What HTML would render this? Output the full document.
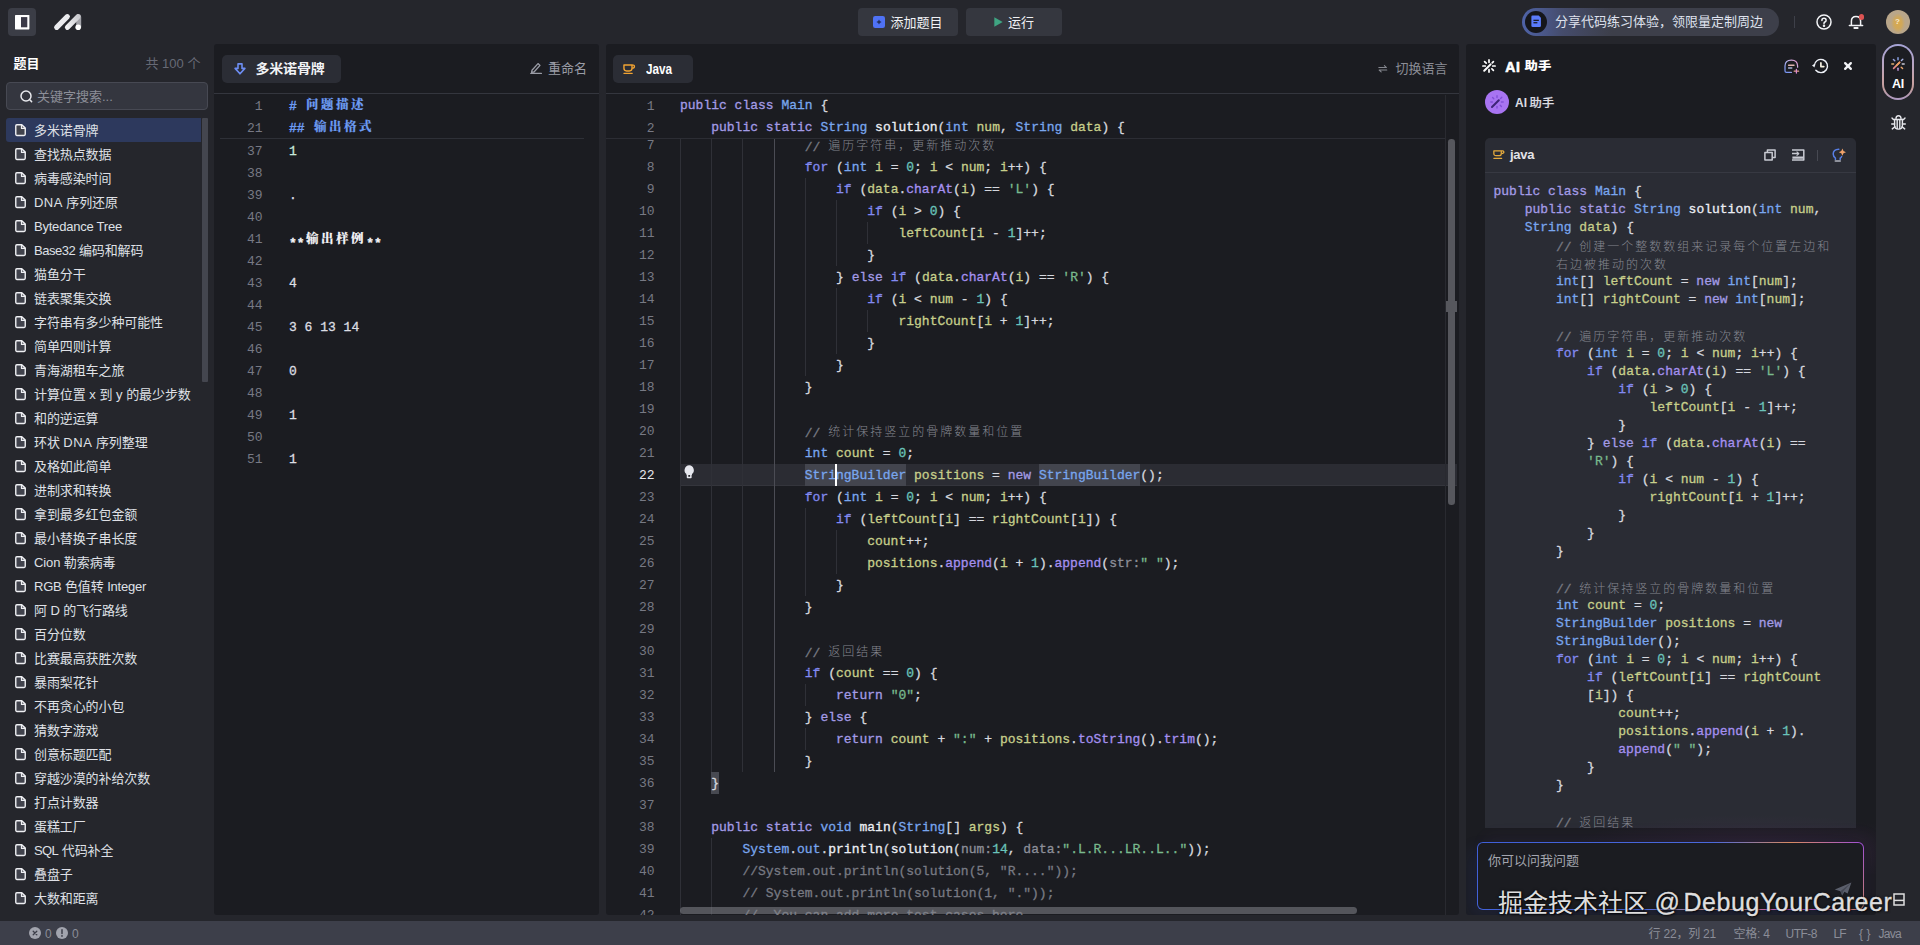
<!DOCTYPE html>
<html lang="zh-CN">
<head>
<meta charset="utf-8">
<title>豆包 MarsCode - 代码练习</title>
<style>

*{box-sizing:border-box;margin:0;padding:0}
html,body{width:1920px;height:945px;overflow:hidden}
body{position:relative;background:#25262c;color:#e4e5ea;
 font-family:"Liberation Sans","Noto Sans CJK SC",sans-serif;font-size:13px;line-height:1}
.abs{position:absolute}
.panel{position:absolute;background:#1b1c21;border-radius:3px;overflow:hidden}
svg{display:block;position:absolute;overflow:visible}
.t{position:absolute;white-space:pre;line-height:1}

/* ---------- top bar ---------- */
#topbar{position:absolute;left:0;top:0;width:1920px;height:44px}
.tbtn{position:absolute;top:8px;height:28px;background:#35373f;border-radius:4px}
#toggle{position:absolute;left:8px;top:8px;width:28px;height:28px;background:#3b3d46;border-radius:4px}
#pill{position:absolute;left:1522px;top:8px;width:1257px;height:28px;border-radius:14px;
 background:linear-gradient(90deg,#4f63a8 0px,#454c6c 40px,#3d3f4a 90px,#3d3f4a 100%);width:257px}

/* ---------- sidebar ---------- */
#sidebar{position:absolute;left:0;top:44px;width:214px;height:877px}
#search{position:absolute;left:6px;top:38px;width:202px;height:28px;background:#34363f;border:1px solid #474953;border-radius:4px}
.item{position:absolute;left:6px;width:195px;height:24px}
.item.sel{background:#2d395d;border-radius:3px 0 0 3px}
.item .t{left:28px;top:6px;font-size:13px;color:#dfe0e6;letter-spacing:-0.1px}
.item svg{left:9.3px;top:6.3px}

/* ---------- code ---------- */
.mono{font-family:"Liberation Mono","Noto Serif CJK SC",monospace;font-size:13px}
.ln{position:absolute;white-space:pre;font-family:"Liberation Mono",monospace;font-size:13px;color:#777984;text-align:right;line-height:22px;height:22px;margin-top:0.6px}
.cl{position:absolute;white-space:pre;font-family:"Liberation Mono","Noto Serif CJK SC",monospace;font-size:13px;line-height:22px;height:22px;color:#d5d7de;-webkit-text-stroke:0.3px;margin-top:0.7px}
.ai .cl{line-height:18px;height:18px;margin-top:0}
.k{color:#a39be6}   /* keyword purple */
.c{color:#838af1}   /* control keyword blue-violet */
.y{color:#79a6ee}   /* type blue */
.v{color:#c7cf8b}   /* variable yellow-green */
.n{color:#6ac3ba}   /* number teal */
.s{color:#79b98d}   /* string green */
.m{color:#a590f0}   /* method call purple */
.f{color:#eceef4}   /* function decl white */
.o{color:#d5d7de}   /* operators */
.h{color:#8d8f99}   /* inlay hint */
.g{color:#787a83}   /* comment */
.g i,.cj{font-style:normal;font-size:12px;letter-spacing:2px;font-family:"Noto Sans CJK SC",sans-serif;font-weight:300;color:#858790;position:relative;top:-0.4px;-webkit-text-stroke:0}
.guide{position:absolute;width:1px;background:#2f3037}

/* ---------- status ---------- */
#status{position:absolute;left:0;top:921px;width:1920px;height:24px;background:#3d3f4a}
#status .t{top:7px;font-size:12px;color:#8b8d98}

.pj{font-family:"Noto Serif CJK SC",serif;font-weight:900;font-size:12.5px;letter-spacing:2.5px;margin-left:1.5px;position:relative;top:-1.3px;-webkit-text-stroke:0.15px}

</style>
</head>
<body>
<div id="topbar">
  <div id="toggle">
    <svg style="left:6.8px;top:6.8px" width="14.4" height="14.4" viewBox="0 0 14.4 14.4"><rect x="0" y="0" width="14.4" height="14.4" rx="0.6" fill="#ffffff"/><rect x="6" y="2.1" width="6.3" height="10.2" fill="#3a3947"/></svg>
  </div>
  <svg style="left:52px;top:12px" width="32" height="20" viewBox="0 0 32 20">
    <defs>
      <linearGradient id="lg1" x1="0" y1="1" x2="1" y2="0"><stop offset="0" stop-color="#ffffff"/><stop offset="1" stop-color="#d2d3d8"/></linearGradient>
      <linearGradient id="lg2" x1="0" y1="1" x2="1" y2="0"><stop offset="0" stop-color="#f1f1f3"/><stop offset="1" stop-color="#cbcbd0"/></linearGradient>
    </defs>
    <path d="M25.6 2.1 Q29.2 2 29.2 5.4 L29.2 15.4 L24.2 15.4 L24.2 6 Z" fill="#a2a2a8"/>
    <line x1="4.7" y1="15.3" x2="15.3" y2="4.7" stroke="#ebebee" stroke-width="5.2" stroke-linecap="round"/>
    <line x1="15.5" y1="15.3" x2="25.9" y2="4.7" stroke="url(#lg2)" stroke-width="5.2" stroke-linecap="round"/>
    <circle cx="26.2" cy="15.3" r="2.8" fill="#ffffff"/>
  </svg>

  <div class="tbtn" style="left:858px;width:100px">
    <svg style="left:15px;top:8px" width="12" height="12" viewBox="0 0 12 12"><rect width="12" height="12" rx="2.2" fill="#4f72f5"/><path d="M6 3.4 L6.9 5.1 L8.6 6 L6.9 6.9 L6 8.6 L5.1 6.9 L3.4 6 L5.1 5.1 Z" fill="#23305f"/></svg>
    <span class="t" style="left:32.5px;top:7.6px;font-size:13px;color:#f1f2f5">添加题目</span>
  </div>
  <div class="tbtn" style="left:966px;width:96px">
    <svg style="left:28px;top:9px" width="9" height="10" viewBox="0 0 9 10"><path d="M0.3 0.2 L8.7 5 L0.3 9.8 Z" fill="#3fa482"/></svg>
    <span class="t" style="left:42px;top:7.6px;font-size:13px;color:#f1f2f5">运行</span>
  </div>

  <div id="pill">
    <div class="abs" style="left:3px;top:3px;width:22px;height:22px;border-radius:11px;background:#15161b"></div>
    <svg style="left:8.6px;top:7.4px" width="10.3" height="12.6" viewBox="0 0 11 13"><path d="M1.6 0.4 H8.2 L10.6 2.6 V11.2 Q10.6 12.6 9.2 12.6 H1.8 Q0.4 12.6 0.4 11.2 V1.6 Q0.4 0.4 1.6 0.4 Z" fill="#5a7bfa"/><rect x="2.6" y="4.8" width="5.8" height="1.3" fill="#15161b"/><rect x="2.6" y="7.4" width="4.2" height="1.3" fill="#15161b"/></svg>
    <span class="t" style="left:33px;top:7.3px;font-size:13px;color:#dfe2ee">分享代码练习体验，领限量定制周边</span>
  </div>
  <div class="abs" style="left:1794px;top:16px;width:1px;height:12px;background:#3e4049"></div>

  <svg style="left:1816px;top:14px" width="16" height="16" viewBox="0 0 16 16" fill="none" stroke="#f3f4f7" stroke-width="1.5" stroke-linecap="round" stroke-linejoin="round"><circle cx="8" cy="8" r="7"/><path d="M5.9 6.4 Q5.9 4.3 8 4.3 Q10.1 4.3 10.1 6.2 Q10.1 7.4 8.9 8 Q8 8.5 8 9.4"/><circle cx="8" cy="11.7" r="0.5" fill="#f3f4f7"/></svg>

  <svg style="left:1848px;top:14px" width="16" height="16" viewBox="0 0 16 16" fill="none" stroke="#f3f4f7" stroke-width="1.5" stroke-linecap="round" stroke-linejoin="round"><path d="M3.4 11.2 V7.2 Q3.4 2.4 8 2.4 Q12.6 2.4 12.6 7.2 V11.2"/><path d="M1.4 11.4 H14.6"/><path d="M6.3 14 H9.7" stroke-width="1.8"/></svg>
  <div class="abs" style="left:1858.6px;top:14.2px;width:5.4px;height:5.4px;border-radius:3px;background:#dd5353"></div>

  <div class="abs" style="left:1886px;top:10px;width:24px;height:24px;border-radius:12px;background:radial-gradient(ellipse 7px 10px at 50% 55%,#d9a94e 0,#d0a85a 55%,#b9a68a 100%)"></div>
  <span class="t" style="left:1895px;top:18px;font-size:8px;font-weight:bold;color:#f6ead0">?</span>
</div>
<div id="sidebar">
<span class="t" style="left:13.5px;top:12.5px;font-size:13px;font-weight:bold;color:#ffffff">题目</span>
<span class="t" style="left:145.5px;top:13px;font-size:13px;color:#676a76">共 100 个</span>
<div id="search"><svg style="left:13px;top:7px" width="13" height="13" viewBox="0 0 13 13" fill="none" stroke="#e8e9ee" stroke-width="1.5" stroke-linecap="round"><circle cx="6" cy="6" r="5"/><path d="M10 10 L11.6 11.6"/></svg><span class="t" style="left:30px;top:6.5px;font-size:13px;color:#8c8e98">关键字搜索...</span></div>
<div class="item sel" style="top:74px"><svg width="11.3" height="12.2" viewBox="0 0 12 13"><path d="M1.9 0.8 H7.2 L10.9 4.4 V11 Q10.9 12.2 9.7 12.2 H1.9 Q0.8 12.2 0.8 11 V2 Q0.8 0.8 1.9 0.8 Z" fill="#41434d" stroke="#eeeff3" stroke-width="1.5" stroke-linejoin="round"/><path d="M6.9 0.9 V4.7 H10.8" fill="none" stroke="#eeeff3" stroke-width="1.3" stroke-linejoin="round"/></svg><span class="t">多米诺骨牌</span></div>
<div class="item" style="top:98px"><svg width="11.3" height="12.2" viewBox="0 0 12 13"><path d="M1.9 0.8 H7.2 L10.9 4.4 V11 Q10.9 12.2 9.7 12.2 H1.9 Q0.8 12.2 0.8 11 V2 Q0.8 0.8 1.9 0.8 Z" fill="#41434d" stroke="#eeeff3" stroke-width="1.5" stroke-linejoin="round"/><path d="M6.9 0.9 V4.7 H10.8" fill="none" stroke="#eeeff3" stroke-width="1.3" stroke-linejoin="round"/></svg><span class="t">查找热点数据</span></div>
<div class="item" style="top:122px"><svg width="11.3" height="12.2" viewBox="0 0 12 13"><path d="M1.9 0.8 H7.2 L10.9 4.4 V11 Q10.9 12.2 9.7 12.2 H1.9 Q0.8 12.2 0.8 11 V2 Q0.8 0.8 1.9 0.8 Z" fill="#41434d" stroke="#eeeff3" stroke-width="1.5" stroke-linejoin="round"/><path d="M6.9 0.9 V4.7 H10.8" fill="none" stroke="#eeeff3" stroke-width="1.3" stroke-linejoin="round"/></svg><span class="t">病毒感染时间</span></div>
<div class="item" style="top:146px"><svg width="11.3" height="12.2" viewBox="0 0 12 13"><path d="M1.9 0.8 H7.2 L10.9 4.4 V11 Q10.9 12.2 9.7 12.2 H1.9 Q0.8 12.2 0.8 11 V2 Q0.8 0.8 1.9 0.8 Z" fill="#41434d" stroke="#eeeff3" stroke-width="1.5" stroke-linejoin="round"/><path d="M6.9 0.9 V4.7 H10.8" fill="none" stroke="#eeeff3" stroke-width="1.3" stroke-linejoin="round"/></svg><span class="t"><span style="letter-spacing:0.45px">DNA</span> 序列还原</span></div>
<div class="item" style="top:170px"><svg width="11.3" height="12.2" viewBox="0 0 12 13"><path d="M1.9 0.8 H7.2 L10.9 4.4 V11 Q10.9 12.2 9.7 12.2 H1.9 Q0.8 12.2 0.8 11 V2 Q0.8 0.8 1.9 0.8 Z" fill="#41434d" stroke="#eeeff3" stroke-width="1.5" stroke-linejoin="round"/><path d="M6.9 0.9 V4.7 H10.8" fill="none" stroke="#eeeff3" stroke-width="1.3" stroke-linejoin="round"/></svg><span class="t"><span style="letter-spacing:-0.22px">Bytedance Tree</span></span></div>
<div class="item" style="top:194px"><svg width="11.3" height="12.2" viewBox="0 0 12 13"><path d="M1.9 0.8 H7.2 L10.9 4.4 V11 Q10.9 12.2 9.7 12.2 H1.9 Q0.8 12.2 0.8 11 V2 Q0.8 0.8 1.9 0.8 Z" fill="#41434d" stroke="#eeeff3" stroke-width="1.5" stroke-linejoin="round"/><path d="M6.9 0.9 V4.7 H10.8" fill="none" stroke="#eeeff3" stroke-width="1.3" stroke-linejoin="round"/></svg><span class="t"><span style="letter-spacing:-0.45px">Base32</span> 编码和解码</span></div>
<div class="item" style="top:218px"><svg width="11.3" height="12.2" viewBox="0 0 12 13"><path d="M1.9 0.8 H7.2 L10.9 4.4 V11 Q10.9 12.2 9.7 12.2 H1.9 Q0.8 12.2 0.8 11 V2 Q0.8 0.8 1.9 0.8 Z" fill="#41434d" stroke="#eeeff3" stroke-width="1.5" stroke-linejoin="round"/><path d="M6.9 0.9 V4.7 H10.8" fill="none" stroke="#eeeff3" stroke-width="1.3" stroke-linejoin="round"/></svg><span class="t">猫鱼分干</span></div>
<div class="item" style="top:242px"><svg width="11.3" height="12.2" viewBox="0 0 12 13"><path d="M1.9 0.8 H7.2 L10.9 4.4 V11 Q10.9 12.2 9.7 12.2 H1.9 Q0.8 12.2 0.8 11 V2 Q0.8 0.8 1.9 0.8 Z" fill="#41434d" stroke="#eeeff3" stroke-width="1.5" stroke-linejoin="round"/><path d="M6.9 0.9 V4.7 H10.8" fill="none" stroke="#eeeff3" stroke-width="1.3" stroke-linejoin="round"/></svg><span class="t">链表聚集交换</span></div>
<div class="item" style="top:266px"><svg width="11.3" height="12.2" viewBox="0 0 12 13"><path d="M1.9 0.8 H7.2 L10.9 4.4 V11 Q10.9 12.2 9.7 12.2 H1.9 Q0.8 12.2 0.8 11 V2 Q0.8 0.8 1.9 0.8 Z" fill="#41434d" stroke="#eeeff3" stroke-width="1.5" stroke-linejoin="round"/><path d="M6.9 0.9 V4.7 H10.8" fill="none" stroke="#eeeff3" stroke-width="1.3" stroke-linejoin="round"/></svg><span class="t">字符串有多少种可能性</span></div>
<div class="item" style="top:290px"><svg width="11.3" height="12.2" viewBox="0 0 12 13"><path d="M1.9 0.8 H7.2 L10.9 4.4 V11 Q10.9 12.2 9.7 12.2 H1.9 Q0.8 12.2 0.8 11 V2 Q0.8 0.8 1.9 0.8 Z" fill="#41434d" stroke="#eeeff3" stroke-width="1.5" stroke-linejoin="round"/><path d="M6.9 0.9 V4.7 H10.8" fill="none" stroke="#eeeff3" stroke-width="1.3" stroke-linejoin="round"/></svg><span class="t">简单四则计算</span></div>
<div class="item" style="top:314px"><svg width="11.3" height="12.2" viewBox="0 0 12 13"><path d="M1.9 0.8 H7.2 L10.9 4.4 V11 Q10.9 12.2 9.7 12.2 H1.9 Q0.8 12.2 0.8 11 V2 Q0.8 0.8 1.9 0.8 Z" fill="#41434d" stroke="#eeeff3" stroke-width="1.5" stroke-linejoin="round"/><path d="M6.9 0.9 V4.7 H10.8" fill="none" stroke="#eeeff3" stroke-width="1.3" stroke-linejoin="round"/></svg><span class="t">青海湖租车之旅</span></div>
<div class="item" style="top:338px"><svg width="11.3" height="12.2" viewBox="0 0 12 13"><path d="M1.9 0.8 H7.2 L10.9 4.4 V11 Q10.9 12.2 9.7 12.2 H1.9 Q0.8 12.2 0.8 11 V2 Q0.8 0.8 1.9 0.8 Z" fill="#41434d" stroke="#eeeff3" stroke-width="1.5" stroke-linejoin="round"/><path d="M6.9 0.9 V4.7 H10.8" fill="none" stroke="#eeeff3" stroke-width="1.3" stroke-linejoin="round"/></svg><span class="t">计算位置 <span style="letter-spacing:0.3px">x</span> 到 <span style="letter-spacing:0.3px">y</span> 的最少步数</span></div>
<div class="item" style="top:362px"><svg width="11.3" height="12.2" viewBox="0 0 12 13"><path d="M1.9 0.8 H7.2 L10.9 4.4 V11 Q10.9 12.2 9.7 12.2 H1.9 Q0.8 12.2 0.8 11 V2 Q0.8 0.8 1.9 0.8 Z" fill="#41434d" stroke="#eeeff3" stroke-width="1.5" stroke-linejoin="round"/><path d="M6.9 0.9 V4.7 H10.8" fill="none" stroke="#eeeff3" stroke-width="1.3" stroke-linejoin="round"/></svg><span class="t">和的逆运算</span></div>
<div class="item" style="top:386px"><svg width="11.3" height="12.2" viewBox="0 0 12 13"><path d="M1.9 0.8 H7.2 L10.9 4.4 V11 Q10.9 12.2 9.7 12.2 H1.9 Q0.8 12.2 0.8 11 V2 Q0.8 0.8 1.9 0.8 Z" fill="#41434d" stroke="#eeeff3" stroke-width="1.5" stroke-linejoin="round"/><path d="M6.9 0.9 V4.7 H10.8" fill="none" stroke="#eeeff3" stroke-width="1.3" stroke-linejoin="round"/></svg><span class="t">环状 <span style="letter-spacing:0.55px">DNA</span> 序列整理</span></div>
<div class="item" style="top:410px"><svg width="11.3" height="12.2" viewBox="0 0 12 13"><path d="M1.9 0.8 H7.2 L10.9 4.4 V11 Q10.9 12.2 9.7 12.2 H1.9 Q0.8 12.2 0.8 11 V2 Q0.8 0.8 1.9 0.8 Z" fill="#41434d" stroke="#eeeff3" stroke-width="1.5" stroke-linejoin="round"/><path d="M6.9 0.9 V4.7 H10.8" fill="none" stroke="#eeeff3" stroke-width="1.3" stroke-linejoin="round"/></svg><span class="t">及格如此简单</span></div>
<div class="item" style="top:434px"><svg width="11.3" height="12.2" viewBox="0 0 12 13"><path d="M1.9 0.8 H7.2 L10.9 4.4 V11 Q10.9 12.2 9.7 12.2 H1.9 Q0.8 12.2 0.8 11 V2 Q0.8 0.8 1.9 0.8 Z" fill="#41434d" stroke="#eeeff3" stroke-width="1.5" stroke-linejoin="round"/><path d="M6.9 0.9 V4.7 H10.8" fill="none" stroke="#eeeff3" stroke-width="1.3" stroke-linejoin="round"/></svg><span class="t">进制求和转换</span></div>
<div class="item" style="top:458px"><svg width="11.3" height="12.2" viewBox="0 0 12 13"><path d="M1.9 0.8 H7.2 L10.9 4.4 V11 Q10.9 12.2 9.7 12.2 H1.9 Q0.8 12.2 0.8 11 V2 Q0.8 0.8 1.9 0.8 Z" fill="#41434d" stroke="#eeeff3" stroke-width="1.5" stroke-linejoin="round"/><path d="M6.9 0.9 V4.7 H10.8" fill="none" stroke="#eeeff3" stroke-width="1.3" stroke-linejoin="round"/></svg><span class="t">拿到最多红包金额</span></div>
<div class="item" style="top:482px"><svg width="11.3" height="12.2" viewBox="0 0 12 13"><path d="M1.9 0.8 H7.2 L10.9 4.4 V11 Q10.9 12.2 9.7 12.2 H1.9 Q0.8 12.2 0.8 11 V2 Q0.8 0.8 1.9 0.8 Z" fill="#41434d" stroke="#eeeff3" stroke-width="1.5" stroke-linejoin="round"/><path d="M6.9 0.9 V4.7 H10.8" fill="none" stroke="#eeeff3" stroke-width="1.3" stroke-linejoin="round"/></svg><span class="t">最小替换子串长度</span></div>
<div class="item" style="top:506px"><svg width="11.3" height="12.2" viewBox="0 0 12 13"><path d="M1.9 0.8 H7.2 L10.9 4.4 V11 Q10.9 12.2 9.7 12.2 H1.9 Q0.8 12.2 0.8 11 V2 Q0.8 0.8 1.9 0.8 Z" fill="#41434d" stroke="#eeeff3" stroke-width="1.5" stroke-linejoin="round"/><path d="M6.9 0.9 V4.7 H10.8" fill="none" stroke="#eeeff3" stroke-width="1.3" stroke-linejoin="round"/></svg><span class="t">Cion 勒索病毒</span></div>
<div class="item" style="top:530px"><svg width="11.3" height="12.2" viewBox="0 0 12 13"><path d="M1.9 0.8 H7.2 L10.9 4.4 V11 Q10.9 12.2 9.7 12.2 H1.9 Q0.8 12.2 0.8 11 V2 Q0.8 0.8 1.9 0.8 Z" fill="#41434d" stroke="#eeeff3" stroke-width="1.5" stroke-linejoin="round"/><path d="M6.9 0.9 V4.7 H10.8" fill="none" stroke="#eeeff3" stroke-width="1.3" stroke-linejoin="round"/></svg><span class="t"><span style="letter-spacing:-0.24px">RGB</span> 色值转 <span style="letter-spacing:-0.24px">Integer</span></span></div>
<div class="item" style="top:554px"><svg width="11.3" height="12.2" viewBox="0 0 12 13"><path d="M1.9 0.8 H7.2 L10.9 4.4 V11 Q10.9 12.2 9.7 12.2 H1.9 Q0.8 12.2 0.8 11 V2 Q0.8 0.8 1.9 0.8 Z" fill="#41434d" stroke="#eeeff3" stroke-width="1.5" stroke-linejoin="round"/><path d="M6.9 0.9 V4.7 H10.8" fill="none" stroke="#eeeff3" stroke-width="1.3" stroke-linejoin="round"/></svg><span class="t">阿 D 的飞行路线</span></div>
<div class="item" style="top:578px"><svg width="11.3" height="12.2" viewBox="0 0 12 13"><path d="M1.9 0.8 H7.2 L10.9 4.4 V11 Q10.9 12.2 9.7 12.2 H1.9 Q0.8 12.2 0.8 11 V2 Q0.8 0.8 1.9 0.8 Z" fill="#41434d" stroke="#eeeff3" stroke-width="1.5" stroke-linejoin="round"/><path d="M6.9 0.9 V4.7 H10.8" fill="none" stroke="#eeeff3" stroke-width="1.3" stroke-linejoin="round"/></svg><span class="t">百分位数</span></div>
<div class="item" style="top:602px"><svg width="11.3" height="12.2" viewBox="0 0 12 13"><path d="M1.9 0.8 H7.2 L10.9 4.4 V11 Q10.9 12.2 9.7 12.2 H1.9 Q0.8 12.2 0.8 11 V2 Q0.8 0.8 1.9 0.8 Z" fill="#41434d" stroke="#eeeff3" stroke-width="1.5" stroke-linejoin="round"/><path d="M6.9 0.9 V4.7 H10.8" fill="none" stroke="#eeeff3" stroke-width="1.3" stroke-linejoin="round"/></svg><span class="t">比赛最高获胜次数</span></div>
<div class="item" style="top:626px"><svg width="11.3" height="12.2" viewBox="0 0 12 13"><path d="M1.9 0.8 H7.2 L10.9 4.4 V11 Q10.9 12.2 9.7 12.2 H1.9 Q0.8 12.2 0.8 11 V2 Q0.8 0.8 1.9 0.8 Z" fill="#41434d" stroke="#eeeff3" stroke-width="1.5" stroke-linejoin="round"/><path d="M6.9 0.9 V4.7 H10.8" fill="none" stroke="#eeeff3" stroke-width="1.3" stroke-linejoin="round"/></svg><span class="t">暴雨梨花针</span></div>
<div class="item" style="top:650px"><svg width="11.3" height="12.2" viewBox="0 0 12 13"><path d="M1.9 0.8 H7.2 L10.9 4.4 V11 Q10.9 12.2 9.7 12.2 H1.9 Q0.8 12.2 0.8 11 V2 Q0.8 0.8 1.9 0.8 Z" fill="#41434d" stroke="#eeeff3" stroke-width="1.5" stroke-linejoin="round"/><path d="M6.9 0.9 V4.7 H10.8" fill="none" stroke="#eeeff3" stroke-width="1.3" stroke-linejoin="round"/></svg><span class="t">不再贪心的小包</span></div>
<div class="item" style="top:674px"><svg width="11.3" height="12.2" viewBox="0 0 12 13"><path d="M1.9 0.8 H7.2 L10.9 4.4 V11 Q10.9 12.2 9.7 12.2 H1.9 Q0.8 12.2 0.8 11 V2 Q0.8 0.8 1.9 0.8 Z" fill="#41434d" stroke="#eeeff3" stroke-width="1.5" stroke-linejoin="round"/><path d="M6.9 0.9 V4.7 H10.8" fill="none" stroke="#eeeff3" stroke-width="1.3" stroke-linejoin="round"/></svg><span class="t">猜数字游戏</span></div>
<div class="item" style="top:698px"><svg width="11.3" height="12.2" viewBox="0 0 12 13"><path d="M1.9 0.8 H7.2 L10.9 4.4 V11 Q10.9 12.2 9.7 12.2 H1.9 Q0.8 12.2 0.8 11 V2 Q0.8 0.8 1.9 0.8 Z" fill="#41434d" stroke="#eeeff3" stroke-width="1.5" stroke-linejoin="round"/><path d="M6.9 0.9 V4.7 H10.8" fill="none" stroke="#eeeff3" stroke-width="1.3" stroke-linejoin="round"/></svg><span class="t">创意标题匹配</span></div>
<div class="item" style="top:722px"><svg width="11.3" height="12.2" viewBox="0 0 12 13"><path d="M1.9 0.8 H7.2 L10.9 4.4 V11 Q10.9 12.2 9.7 12.2 H1.9 Q0.8 12.2 0.8 11 V2 Q0.8 0.8 1.9 0.8 Z" fill="#41434d" stroke="#eeeff3" stroke-width="1.5" stroke-linejoin="round"/><path d="M6.9 0.9 V4.7 H10.8" fill="none" stroke="#eeeff3" stroke-width="1.3" stroke-linejoin="round"/></svg><span class="t">穿越沙漠的补给次数</span></div>
<div class="item" style="top:746px"><svg width="11.3" height="12.2" viewBox="0 0 12 13"><path d="M1.9 0.8 H7.2 L10.9 4.4 V11 Q10.9 12.2 9.7 12.2 H1.9 Q0.8 12.2 0.8 11 V2 Q0.8 0.8 1.9 0.8 Z" fill="#41434d" stroke="#eeeff3" stroke-width="1.5" stroke-linejoin="round"/><path d="M6.9 0.9 V4.7 H10.8" fill="none" stroke="#eeeff3" stroke-width="1.3" stroke-linejoin="round"/></svg><span class="t">打点计数器</span></div>
<div class="item" style="top:770px"><svg width="11.3" height="12.2" viewBox="0 0 12 13"><path d="M1.9 0.8 H7.2 L10.9 4.4 V11 Q10.9 12.2 9.7 12.2 H1.9 Q0.8 12.2 0.8 11 V2 Q0.8 0.8 1.9 0.8 Z" fill="#41434d" stroke="#eeeff3" stroke-width="1.5" stroke-linejoin="round"/><path d="M6.9 0.9 V4.7 H10.8" fill="none" stroke="#eeeff3" stroke-width="1.3" stroke-linejoin="round"/></svg><span class="t">蛋糕工厂</span></div>
<div class="item" style="top:794px"><svg width="11.3" height="12.2" viewBox="0 0 12 13"><path d="M1.9 0.8 H7.2 L10.9 4.4 V11 Q10.9 12.2 9.7 12.2 H1.9 Q0.8 12.2 0.8 11 V2 Q0.8 0.8 1.9 0.8 Z" fill="#41434d" stroke="#eeeff3" stroke-width="1.5" stroke-linejoin="round"/><path d="M6.9 0.9 V4.7 H10.8" fill="none" stroke="#eeeff3" stroke-width="1.3" stroke-linejoin="round"/></svg><span class="t"><span style="letter-spacing:-0.6px">SQL</span> 代码补全</span></div>
<div class="item" style="top:818px"><svg width="11.3" height="12.2" viewBox="0 0 12 13"><path d="M1.9 0.8 H7.2 L10.9 4.4 V11 Q10.9 12.2 9.7 12.2 H1.9 Q0.8 12.2 0.8 11 V2 Q0.8 0.8 1.9 0.8 Z" fill="#41434d" stroke="#eeeff3" stroke-width="1.5" stroke-linejoin="round"/><path d="M6.9 0.9 V4.7 H10.8" fill="none" stroke="#eeeff3" stroke-width="1.3" stroke-linejoin="round"/></svg><span class="t">叠盘子</span></div>
<div class="item" style="top:842px"><svg width="11.3" height="12.2" viewBox="0 0 12 13"><path d="M1.9 0.8 H7.2 L10.9 4.4 V11 Q10.9 12.2 9.7 12.2 H1.9 Q0.8 12.2 0.8 11 V2 Q0.8 0.8 1.9 0.8 Z" fill="#41434d" stroke="#eeeff3" stroke-width="1.5" stroke-linejoin="round"/><path d="M6.9 0.9 V4.7 H10.8" fill="none" stroke="#eeeff3" stroke-width="1.3" stroke-linejoin="round"/></svg><span class="t">大数和距离</span></div>
<div class="abs" style="left:202px;top:74px;width:6px;height:264px;background:#44464f;border-radius:1px"></div>
</div>
<div class="panel" id="problem" style="left:214px;top:44px;width:385px;height:871px">
<div class="abs" style="left:8px;top:11px;width:119px;height:28px;background:#2b2d35;border-radius:5px"><svg style="left:11.5px;top:8px" width="12" height="12" viewBox="0 0 12 12" fill="none" stroke="#6d8df2" stroke-width="1.6" stroke-linejoin="round"><path d="M4 0.9 H8 V5.4 H10.9 L6 10.8 L1.1 5.4 H4 Z"/></svg><span class="t" style="left:33.5px;top:5.5px;font-size:14px;font-weight:bold;color:#f2f3f6;letter-spacing:-0.2px;transform:scaleY(0.93)">多米诺骨牌</span></div>
<svg style="left:316px;top:18px" width="12" height="12" viewBox="0 0 12 12" fill="none" stroke="#9a9ca6" stroke-width="1.3" stroke-linejoin="round" stroke-linecap="round"><path d="M2 8.2 L8 1.6 L10 3.4 L4 10 L1.6 10.4 Z"/><path d="M0.8 11.4 H11.4"/></svg>
<span class="t" style="left:334px;top:18px;font-size:13px;color:#9a9ca6">重命名</span>
<div class="abs" style="left:0;top:49px;width:385px;height:1px;background:#34363e"></div>
<div class="ln" style="left:0;top:51px;width:48.5px">1</div>
<div class="cl" style="left:75px;top:49.6px;color:#6c9af1;font-weight:bold"># <span class="pj">问题描述</span></div>
<div class="ln" style="left:0;top:73px;width:48.5px">21</div>
<div class="cl" style="left:75px;top:71.6px;color:#6c9af1;font-weight:bold">## <span class="pj">输出格式</span></div>
<div class="abs" style="left:6px;top:94px;width:364px;height:1px;background:#2e3037"></div>
<div class="ln" style="left:0;top:96px;width:48.5px">37</div>
<div class="cl" style="left:75px;top:96px;color:#c6e8da">1</div>
<div class="ln" style="left:0;top:118px;width:48.5px">38</div>
<div class="ln" style="left:0;top:140px;width:48.5px">39</div>
<div class="cl" style="left:75px;top:140px;color:#dcdde2">.</div>
<div class="ln" style="left:0;top:162px;width:48.5px">40</div>
<div class="ln" style="left:0;top:184px;width:48.5px">41</div>
<div class="cl" style="left:75px;top:184px;color:#f4f4f7;font-weight:bold"><span style="position:relative;top:2.5px">**</span><span class="pj">输出样例</span><span style="position:relative;top:2.5px">**</span></div>
<div class="ln" style="left:0;top:206px;width:48.5px">42</div>
<div class="ln" style="left:0;top:228px;width:48.5px">43</div>
<div class="cl" style="left:75px;top:228px;color:#dcdde2">4</div>
<div class="ln" style="left:0;top:250px;width:48.5px">44</div>
<div class="ln" style="left:0;top:272px;width:48.5px">45</div>
<div class="cl" style="left:75px;top:272px;color:#dcdde2">3 6 13 14</div>
<div class="ln" style="left:0;top:294px;width:48.5px">46</div>
<div class="ln" style="left:0;top:316px;width:48.5px">47</div>
<div class="cl" style="left:75px;top:316px;color:#dcdde2">0</div>
<div class="ln" style="left:0;top:338px;width:48.5px">48</div>
<div class="ln" style="left:0;top:360px;width:48.5px">49</div>
<div class="cl" style="left:75px;top:360px;color:#dcdde2">1</div>
<div class="ln" style="left:0;top:382px;width:48.5px">50</div>
<div class="ln" style="left:0;top:404px;width:48.5px">51</div>
<div class="cl" style="left:75px;top:404px;color:#dcdde2">1</div>
</div>
<div class="panel" id="editor" style="left:605.6px;top:44px;width:853.4px;height:871px"><div class="abs" style="left:0.4px;top:0;width:853px;height:871px">
<div class="abs" style="left:0;top:95px;width:853px;height:776px;overflow:hidden"><div class="abs" style="left:0;top:-95px;width:853px;height:871px">
<div class="abs" style="left:74px;top:420px;width:777px;height:22px;background:#2b2c33;border-bottom:1px solid #34353c"></div>
<div class="abs" style="left:198.8px;top:420px;width:101.4px;height:22px;background:#43454e"></div>
<div class="abs" style="left:432.8px;top:420px;width:101.4px;height:22px;background:#43454e"></div>
<div class="abs" style="left:105.2px;top:728px;width:8px;height:22px;background:#474951"></div>
<div class="guide" style="left:74.0px;top:90px;height:792px;background:#2f3037"></div>
<div class="guide" style="left:105.2px;top:90px;height:638px;background:#2f3037"></div>
<div class="guide" style="left:136.4px;top:90px;height:638px;background:#2f3037"></div>
<div class="guide" style="left:167.6px;top:90px;height:638px;background:#4b4c54"></div>
<div class="guide" style="left:198.8px;top:134px;height:198px;background:#2f3037"></div>
<div class="guide" style="left:230.0px;top:156px;height:66px;background:#2f3037"></div>
<div class="guide" style="left:261.2px;top:178px;height:22px;background:#2f3037"></div>
<div class="guide" style="left:230.0px;top:244px;height:66px;background:#2f3037"></div>
<div class="guide" style="left:261.2px;top:266px;height:22px;background:#2f3037"></div>
<div class="guide" style="left:198.8px;top:464px;height:88px;background:#2f3037"></div>
<div class="guide" style="left:230.0px;top:486px;height:44px;background:#2f3037"></div>
<div class="guide" style="left:198.8px;top:640px;height:22px;background:#2f3037"></div>
<div class="guide" style="left:198.8px;top:684px;height:22px;background:#2f3037"></div>
<div class="guide" style="left:105.2px;top:794px;height:88px;background:#2f3037"></div>
<div class="ln" style="left:0;top:90px;width:48.5px">7</div>
<div class="cl" style="left:74px;top:90px">                <span class="g">// <i>遍历字符串，更新推动次数</i></span></div>
<div class="ln" style="left:0;top:112px;width:48.5px">8</div>
<div class="cl" style="left:74px;top:112px">                <span class="c">for</span> (<span class="y">int</span> <span class="v">i</span> = <span class="n">0</span>; <span class="v">i</span> &lt; <span class="v">num</span>; <span class="v">i</span>++) {</div>
<div class="ln" style="left:0;top:134px;width:48.5px">9</div>
<div class="cl" style="left:74px;top:134px">                    <span class="c">if</span> (<span class="v">data</span>.<span class="m">charAt</span>(<span class="v">i</span>) == <span class="s">'L'</span>) {</div>
<div class="ln" style="left:0;top:156px;width:48.5px">10</div>
<div class="cl" style="left:74px;top:156px">                        <span class="c">if</span> (<span class="v">i</span> &gt; <span class="n">0</span>) {</div>
<div class="ln" style="left:0;top:178px;width:48.5px">11</div>
<div class="cl" style="left:74px;top:178px">                            <span class="v">leftCount</span>[<span class="v">i</span> - <span class="n">1</span>]++;</div>
<div class="ln" style="left:0;top:200px;width:48.5px">12</div>
<div class="cl" style="left:74px;top:200px">                        }</div>
<div class="ln" style="left:0;top:222px;width:48.5px">13</div>
<div class="cl" style="left:74px;top:222px">                    } <span class="k">else</span> <span class="c">if</span> (<span class="v">data</span>.<span class="m">charAt</span>(<span class="v">i</span>) == <span class="s">'R'</span>) {</div>
<div class="ln" style="left:0;top:244px;width:48.5px">14</div>
<div class="cl" style="left:74px;top:244px">                        <span class="c">if</span> (<span class="v">i</span> &lt; <span class="v">num</span> - <span class="n">1</span>) {</div>
<div class="ln" style="left:0;top:266px;width:48.5px">15</div>
<div class="cl" style="left:74px;top:266px">                            <span class="v">rightCount</span>[<span class="v">i</span> + <span class="n">1</span>]++;</div>
<div class="ln" style="left:0;top:288px;width:48.5px">16</div>
<div class="cl" style="left:74px;top:288px">                        }</div>
<div class="ln" style="left:0;top:310px;width:48.5px">17</div>
<div class="cl" style="left:74px;top:310px">                    }</div>
<div class="ln" style="left:0;top:332px;width:48.5px">18</div>
<div class="cl" style="left:74px;top:332px">                }</div>
<div class="ln" style="left:0;top:354px;width:48.5px">19</div>
<div class="ln" style="left:0;top:376px;width:48.5px">20</div>
<div class="cl" style="left:74px;top:376px">                <span class="g">// <i>统计保持竖立的骨牌数量和位置</i></span></div>
<div class="ln" style="left:0;top:398px;width:48.5px">21</div>
<div class="cl" style="left:74px;top:398px">                <span class="y">int</span> <span class="v">count</span> = <span class="n">0</span>;</div>
<div class="ln" style="left:0;top:420px;width:48.5px;color:#e6e7ec">22</div>
<div class="cl" style="left:74px;top:420px">                <span class="y">StringBuilder</span> <span class="v">positions</span> = <span class="k">new</span> <span class="y">StringBuilder</span>();</div>
<div class="ln" style="left:0;top:442px;width:48.5px">23</div>
<div class="cl" style="left:74px;top:442px">                <span class="c">for</span> (<span class="y">int</span> <span class="v">i</span> = <span class="n">0</span>; <span class="v">i</span> &lt; <span class="v">num</span>; <span class="v">i</span>++) {</div>
<div class="ln" style="left:0;top:464px;width:48.5px">24</div>
<div class="cl" style="left:74px;top:464px">                    <span class="c">if</span> (<span class="v">leftCount</span>[<span class="v">i</span>] == <span class="v">rightCount</span>[<span class="v">i</span>]) {</div>
<div class="ln" style="left:0;top:486px;width:48.5px">25</div>
<div class="cl" style="left:74px;top:486px">                        <span class="v">count</span>++;</div>
<div class="ln" style="left:0;top:508px;width:48.5px">26</div>
<div class="cl" style="left:74px;top:508px">                        <span class="v">positions</span>.<span class="m">append</span>(<span class="v">i</span> + <span class="n">1</span>).<span class="m">append</span>(<span class="h">str:</span><span class="s">" "</span>);</div>
<div class="ln" style="left:0;top:530px;width:48.5px">27</div>
<div class="cl" style="left:74px;top:530px">                    }</div>
<div class="ln" style="left:0;top:552px;width:48.5px">28</div>
<div class="cl" style="left:74px;top:552px">                }</div>
<div class="ln" style="left:0;top:574px;width:48.5px">29</div>
<div class="ln" style="left:0;top:596px;width:48.5px">30</div>
<div class="cl" style="left:74px;top:596px">                <span class="g">// <i>返回结果</i></span></div>
<div class="ln" style="left:0;top:618px;width:48.5px">31</div>
<div class="cl" style="left:74px;top:618px">                <span class="c">if</span> (<span class="v">count</span> == <span class="n">0</span>) {</div>
<div class="ln" style="left:0;top:640px;width:48.5px">32</div>
<div class="cl" style="left:74px;top:640px">                    <span class="k">return</span> <span class="s">"0"</span>;</div>
<div class="ln" style="left:0;top:662px;width:48.5px">33</div>
<div class="cl" style="left:74px;top:662px">                } <span class="k">else</span> {</div>
<div class="ln" style="left:0;top:684px;width:48.5px">34</div>
<div class="cl" style="left:74px;top:684px">                    <span class="k">return</span> <span class="v">count</span> + <span class="s">":"</span> + <span class="v">positions</span>.<span class="m">toString</span>().<span class="m">trim</span>();</div>
<div class="ln" style="left:0;top:706px;width:48.5px">35</div>
<div class="cl" style="left:74px;top:706px">                }</div>
<div class="ln" style="left:0;top:728px;width:48.5px">36</div>
<div class="cl" style="left:74px;top:728px">    }</div>
<div class="ln" style="left:0;top:750px;width:48.5px">37</div>
<div class="ln" style="left:0;top:772px;width:48.5px">38</div>
<div class="cl" style="left:74px;top:772px">    <span class="k">public</span> <span class="k">static</span> <span class="y">void</span> <span class="f">main</span>(<span class="y">String</span>[] <span class="v">args</span>) {</div>
<div class="ln" style="left:0;top:794px;width:48.5px">39</div>
<div class="cl" style="left:74px;top:794px">        <span class="y">System</span>.<span class="y">out</span>.<span class="f">println</span>(<span class="f">solution</span>(<span class="h">num:</span><span class="n">14</span>, <span class="h">data:</span><span class="s">".L.R...LR..L.."</span>));</div>
<div class="ln" style="left:0;top:816px;width:48.5px">40</div>
<div class="cl" style="left:74px;top:816px">        <span class="g">//System.out.println(solution(5, "R...."));</span></div>
<div class="ln" style="left:0;top:838px;width:48.5px">41</div>
<div class="cl" style="left:74px;top:838px">        <span class="g">// System.out.println(solution(1, "."));</span></div>
<div class="ln" style="left:0;top:860px;width:48.5px">42</div>
<div class="cl" style="left:74px;top:860px">        <span class="g">//  You can add more test cases here</span></div>
<div class="abs" style="left:228.6px;top:420px;width:2px;height:22px;background:#ffffff"></div>
<svg style="left:77.6px;top:420.8px" width="10.4" height="13.6" viewBox="0 0 12 15.7"><path d="M6 0.4 A5.6 5.6 0 0 1 9.2 10.4 V11.6 H2.8 V10.4 A5.6 5.6 0 0 1 6 0.4 Z" fill="#e6e7ee"/><rect x="3.2" y="10.6" width="5.6" height="4.6" rx="0.9" fill="#e6e7ee"/><rect x="4.9" y="11.6" width="2.2" height="2" rx="0.6" fill="#1b1c21"/></svg>
</div></div>
<div class="ln" style="left:0;top:51px;width:48.5px">1</div>
<div class="cl" style="left:74px;top:50.3px"><span class="k">public</span> <span class="k">class</span> <span class="y">Main</span> {</div>
<div class="ln" style="left:0;top:73px;width:48.5px">2</div>
<div class="cl" style="left:74px;top:72.3px">    <span class="k">public</span> <span class="k">static</span> <span class="y">String</span> <span class="f">solution</span>(<span class="y">int</span> <span class="v">num</span>, <span class="y">String</span> <span class="v">data</span>) {</div>
<div class="abs" style="left:0;top:94px;width:839px;height:1px;background:#2c2d34"></div>
<div class="abs" style="left:7px;top:11px;width:80px;height:28px;background:#2b2d35;border-radius:5px"><svg style="left:10.5px;top:8.5px" width="12.2" height="10.3" viewBox="0 0 13 11" fill="none" stroke="#f0a232" stroke-width="1.5" stroke-linejoin="round"><path d="M1 1 H9.6 V4.6 Q9.6 7.4 6.8 7.4 H3.8 Q1 7.4 1 4.6 Z"/><path d="M9.6 1.2 H11.2 Q12.2 1.2 12.2 2.6 Q12.2 4.4 9.8 4.6"/><path d="M1 10 H9.8" stroke-linecap="round"/></svg><span class="t" style="left:33.5px;top:6.5px;font-size:14px;font-weight:bold;color:#ffffff;transform:scaleX(0.84);transform-origin:0 50%">Java</span></div>
<svg style="left:772.5px;top:21px" width="9.6" height="7.6" viewBox="0 0 11 9" fill="none" stroke="#85878f" stroke-width="1.3" stroke-linecap="round" stroke-linejoin="round"><path d="M0.8 3 H9.8 L7.4 0.8"/><path d="M10.2 6 H1.2 L3.6 8.2"/></svg>
<span class="t" style="left:789.5px;top:18px;font-size:13px;color:#8b8d96">切换语言</span>
<div class="abs" style="left:0;top:49px;width:853px;height:1px;background:#34363e"></div>
<div class="abs" style="left:839px;top:51px;width:1px;height:820px;background:#292a30"></div>
<div class="abs" style="left:842.4px;top:95px;width:6.6px;height:366px;background:#56575d;border-radius:3.3px"></div>
<div class="abs" style="left:840px;top:257px;width:11px;height:11px;background:#56575d"></div>
<div class="abs" style="left:74px;top:863px;width:677px;height:7px;background:rgba(132,133,140,.55);border-radius:3.5px"></div>
</div></div>
<div class="panel ai" id="ai" style="left:1465.6px;top:44px;width:410.4px;height:871px"><div class="abs" style="left:0.4px;top:0;width:410px;height:871px">
<svg style="left:16px;top:15px" width="14" height="14" viewBox="0 0 14 14" fill="none" stroke="#ffffff" stroke-width="1.7" stroke-linecap="round"><path d="M7 0.9 V3.3"/><path d="M7 10.7 V13.1"/><path d="M0.9 7 H3.3"/><path d="M10.7 7 H13.1"/><path d="M2.6 2.6 L4.2 4.2"/><path d="M9.9 9.9 L11.4 11.4"/><path d="M2.2 11.8 L8.6 5.4" stroke-width="2"/><path d="M10.2 3.8 L11.4 2.6"/></svg>
<span class="t" style="left:39.2px;top:15.5px;font-size:14px;font-weight:bold;color:#ffffff;letter-spacing:0.7px;-webkit-text-stroke:0.6px">AI</span><span class="t" style="left:58.6px;top:16px;font-size:13.4px;font-weight:900;color:#ffffff;transform:scaleY(0.85)">助手</span>
<svg style="left:318px;top:15px" width="16" height="15" viewBox="0 0 16 15" fill="none" stroke-width="1.25" stroke-linecap="round" stroke-linejoin="round"><defs><linearGradient id="gch" x1="0" y1="1" x2="1" y2="0"><stop offset="0" stop-color="#6f8ff0"/><stop offset="0.55" stop-color="#b9b4ea"/><stop offset="1" stop-color="#e58fc4"/></linearGradient></defs><path d="M7.4 13.4 H2.4 Q1 13.4 1 12 V7 Q1 1 7.4 1 Q13.6 1 13.6 7 V8.2" stroke="url(#gch)"/><path d="M4.6 6.2 H10" stroke="#e2b5b0" stroke-width="1.4"/><path d="M4.6 9 H7.8" stroke="#aab3d6" stroke-width="1.4"/><path d="M10.2 12.2 H14.6" stroke="#e9a08a"/><path d="M12.4 10.4 V14" stroke="#d98ad6"/></svg>
<svg style="left:346px;top:14px" width="17" height="16" viewBox="0 0 17 16" fill="none" stroke="#eef1f8" stroke-width="1.4" stroke-linecap="round" stroke-linejoin="round"><path d="M2.31 7.65 A6.6 6.6 0 1 1 3.84 12.24"/><path d="M0 7.6 L2.6 5.8 L2.6 9.4 Z" fill="#eef1f8" stroke="none"/><path d="M8.9 4.9 V8.6 H11.8" stroke="#f6f1e2" stroke-width="1.7"/></svg>
<svg style="left:378.2px;top:18.2px" width="8" height="8" viewBox="0 0 9 9" stroke="#f2f3f6" stroke-width="2.6" stroke-linecap="round"><path d="M1.3 1.3 L7.7 7.7"/><path d="M7.7 1.3 L1.3 7.7"/></svg>
<div class="abs" style="left:19px;top:46px;width:24px;height:24px;border-radius:12px;background:#a874f2"></div>
<svg style="left:24px;top:51px" width="14" height="14" viewBox="0 0 14 14" fill="none" stroke="#3d2478" stroke-width="1.4" stroke-linecap="round"><path d="M2 12 L8.8 5.2" stroke-width="2"/><path d="M7 0.8 V2.6" stroke="#8250d8"/><path d="M11.4 7 H13.2" stroke="#8250d8"/><path d="M10.6 3.4 L11.8 2.2" stroke="#8250d8"/><path d="M2.6 2.6 L3.8 3.8" stroke="#8250d8"/><path d="M10.2 10.2 L11.4 11.4" stroke="#8250d8"/><path d="M7 11.4 V13" stroke="#8250d8"/><path d="M0.8 7 H2.4" stroke="#8250d8"/></svg>
<span class="t" style="left:49px;top:53px;font-size:12px;font-weight:bold;color:#dcdce1">AI</span><span class="t" style="left:63.6px;top:52.6px;font-size:12.3px;font-weight:500;color:#dcdce1;-webkit-text-stroke:0.25px;transform:scaleY(0.9)">助手</span>
<div class="abs" style="left:0;top:90px;width:410px;height:694px;overflow:hidden">
<div class="abs" style="left:19px;top:4px;width:371px;height:760px;background:#2a2c34;border-radius:5px">
<svg style="left:8.5px;top:12px" width="12" height="9.2" viewBox="0 0 13 10" fill="none" stroke="#e3a93c" stroke-width="1.4" stroke-linejoin="round"><path d="M0.9 0.9 H9 V3.8 Q9 6.2 6.6 6.2 H3.4 Q0.9 6.2 0.9 3.8 Z"/><path d="M9 1 H10.6 Q11.8 1 11.8 2.2 Q11.8 3.8 9.2 4"/><path d="M0.9 9 H9.4" stroke-linecap="round"/></svg>
<span class="t" style="left:25px;top:10px;font-size:13px;font-weight:bold;color:#e2e3e8;letter-spacing:-0.3px">java</span>
<svg style="left:279px;top:11px" width="12" height="12" viewBox="0 0 12 12" fill="none" stroke="#c8cad2" stroke-width="1.5" stroke-linejoin="round"><path d="M0.9 3.6 H8.2 V11.1 H0.9 Z"/><path d="M3.4 3.2 V0.9 H11.1 V8.6 H8.6"/></svg>
<svg style="left:306px;top:11px" width="14" height="12" viewBox="0 0 14 12" fill="none" stroke="#c8cad2" stroke-width="1.5" stroke-linejoin="round"><path d="M1 0.9 H12.8 V11 H1"/><path d="M1.4 8.6 H12.6" stroke-width="2.2"/><path d="M1 4.6 H7.6"/><path d="M5.6 2.6 L7.8 4.6 L5.6 6.6" stroke-width="1.2"/></svg>
<div class="abs" style="left:332.5px;top:11.5px;width:1px;height:11px;background:#474952"></div>
<svg style="left:347px;top:10px" width="14" height="15" viewBox="0 0 14 15" fill="none" stroke-width="1.5" stroke-linecap="round" stroke-linejoin="round"><path d="M6.8 1.2 Q1.2 1.4 1.2 6 Q1.2 8.4 3.4 10 V11.4" stroke="#587fe6"/><path d="M9.6 8.6 Q9.4 9.4 8.2 10.2 V11.4" stroke="#587fe6"/><path d="M3.6 13 H8" stroke="#8f929c" stroke-width="2.2"/><path d="M10.4 0.6 L11.5 3.1 L14 4.2 L11.5 5.3 L10.4 7.8 L9.3 5.3 L6.8 4.2 L9.3 3.1 Z" fill="#f0a26a" stroke="none"/></svg>
<div class="abs" style="left:0;top:34px;width:371px;height:1px;background:#373942"></div>
<div class="cl" style="left:8.5px;top:45px"><span class="k">public</span> <span class="k">class</span> <span class="y">Main</span> {</div>
<div class="cl" style="left:8.5px;top:63px">    <span class="k">public</span> <span class="k">static</span> <span class="y">String</span> <span class="f">solution</span>(<span class="y">int</span> <span class="v">num</span>, </div>
<div class="cl" style="left:8.5px;top:81px">    <span class="y">String</span> <span class="v">data</span>) {</div>
<div class="cl" style="left:8.5px;top:99px">        <span class="g">// <i>创建一个整数数组来记录每个位置左边和</i></span></div>
<div class="cl" style="left:8.5px;top:117px">        <span class="g"><i>右边被推动的次数</i></span></div>
<div class="cl" style="left:8.5px;top:135px">        <span class="y">int</span>[] <span class="v">leftCount</span> = <span class="k">new</span> <span class="y">int</span>[<span class="v">num</span>];</div>
<div class="cl" style="left:8.5px;top:153px">        <span class="y">int</span>[] <span class="v">rightCount</span> = <span class="k">new</span> <span class="y">int</span>[<span class="v">num</span>];</div>
<div class="cl" style="left:8.5px;top:189px">        <span class="g">// <i>遍历字符串，更新推动次数</i></span></div>
<div class="cl" style="left:8.5px;top:207px">        <span class="c">for</span> (<span class="y">int</span> <span class="v">i</span> = <span class="n">0</span>; <span class="v">i</span> &lt; <span class="v">num</span>; <span class="v">i</span>++) {</div>
<div class="cl" style="left:8.5px;top:225px">            <span class="c">if</span> (<span class="v">data</span>.<span class="m">charAt</span>(<span class="v">i</span>) == <span class="s">'L'</span>) {</div>
<div class="cl" style="left:8.5px;top:243px">                <span class="c">if</span> (<span class="v">i</span> &gt; <span class="n">0</span>) {</div>
<div class="cl" style="left:8.5px;top:261px">                    <span class="v">leftCount</span>[<span class="v">i</span> - <span class="n">1</span>]++;</div>
<div class="cl" style="left:8.5px;top:279px">                }</div>
<div class="cl" style="left:8.5px;top:297px">            } <span class="k">else</span> <span class="c">if</span> (<span class="v">data</span>.<span class="m">charAt</span>(<span class="v">i</span>) == </div>
<div class="cl" style="left:8.5px;top:315px">            <span class="s">'R'</span>) {</div>
<div class="cl" style="left:8.5px;top:333px">                <span class="c">if</span> (<span class="v">i</span> &lt; <span class="v">num</span> - <span class="n">1</span>) {</div>
<div class="cl" style="left:8.5px;top:351px">                    <span class="v">rightCount</span>[<span class="v">i</span> + <span class="n">1</span>]++;</div>
<div class="cl" style="left:8.5px;top:369px">                }</div>
<div class="cl" style="left:8.5px;top:387px">            }</div>
<div class="cl" style="left:8.5px;top:405px">        }</div>
<div class="cl" style="left:8.5px;top:441px">        <span class="g">// <i>统计保持竖立的骨牌数量和位置</i></span></div>
<div class="cl" style="left:8.5px;top:459px">        <span class="y">int</span> <span class="v">count</span> = <span class="n">0</span>;</div>
<div class="cl" style="left:8.5px;top:477px">        <span class="y">StringBuilder</span> <span class="v">positions</span> = <span class="k">new</span> </div>
<div class="cl" style="left:8.5px;top:495px">        <span class="y">StringBuilder</span>();</div>
<div class="cl" style="left:8.5px;top:513px">        <span class="c">for</span> (<span class="y">int</span> <span class="v">i</span> = <span class="n">0</span>; <span class="v">i</span> &lt; <span class="v">num</span>; <span class="v">i</span>++) {</div>
<div class="cl" style="left:8.5px;top:531px">            <span class="c">if</span> (<span class="v">leftCount</span>[<span class="v">i</span>] == <span class="v">rightCount</span></div>
<div class="cl" style="left:8.5px;top:549px">            [<span class="v">i</span>]) {</div>
<div class="cl" style="left:8.5px;top:567px">                <span class="v">count</span>++;</div>
<div class="cl" style="left:8.5px;top:585px">                <span class="v">positions</span>.<span class="m">append</span>(<span class="v">i</span> + <span class="n">1</span>).</div>
<div class="cl" style="left:8.5px;top:603px">                <span class="m">append</span>(<span class="s">" "</span>);</div>
<div class="cl" style="left:8.5px;top:621px">            }</div>
<div class="cl" style="left:8.5px;top:639px">        }</div>
<div class="cl" style="left:8.5px;top:675px">        <span class="g">// <i>返回结果</i></span></div>
<div class="cl" style="left:8.5px;top:693px">        <span class="c">if</span> (<span class="v">count</span> == <span class="n">0</span>) {</div>
</div></div>
<div class="abs" style="left:100px;top:770px;width:310px;height:60px;background:radial-gradient(ellipse at 60% 60%,rgba(140,60,150,.12) 0,rgba(140,60,150,0) 70%)"></div>
<div class="abs" style="left:11px;top:798px;width:387px;height:68px;border-radius:6px;box-shadow:-8px 8px 18px rgba(59,91,219,.10),8px -6px 18px rgba(160,70,200,.05);background:linear-gradient(135deg,#3f5fd8 0,#4a69dc 52%,#d88a62 69%,#a04fd6 85%,#c88468 100%)"><div class="abs" style="left:1px;top:1px;width:385px;height:66px;border-radius:5px;background:#1b1c21"></div><span class="t" style="left:11px;top:12px;font-size:13px;color:#a3a5ae">你可以问我问题</span><svg style="left:357px;top:40px" width="18" height="14" viewBox="0 0 18 14"><path d="M17.4 0.4 L0.8 7.6 L6.4 9.2 L8.2 13.4 L10.4 9.8 L13.6 11.6 Z" fill="#5b5f6c"/><path d="M17.4 0.4 L6.4 9.2 L8.2 13.4 L9 9.6 Z" fill="#454854"/></svg></div>
</div></div>
<div id="rail">
  <div class="abs" style="left:1882px;top:44px;width:32px;height:56px;border-radius:16px;background:linear-gradient(180deg,#a5a3d6 0,#b7a5c4 35%,#c8a3a6 62%,#c29d9c 80%,#ab98c2 100%)">
    <div class="abs" style="left:1.9px;top:1.9px;width:28.2px;height:52.2px;border-radius:14.1px;background:#1c1d22"></div>
    <svg style="left:9px;top:12.5px" width="14" height="14" viewBox="0 0 14 14" fill="none" stroke-width="1.4" stroke-linecap="round">
      <path d="M2.6 11.4 L8.6 5.4" stroke="#e58a8a" stroke-width="1.6"/><path d="M5.6 8.4 L8.6 5.4" stroke="#eda05e" stroke-width="1.6"/><path d="M7 0.8 V2.8" stroke="#8fa8f0"/><path d="M11.2 7 H13.2" stroke="#c9c9d6"/><path d="M10.4 3.6 L11.8 2.2" stroke="#a9b6e8"/><path d="M2.4 2.4 L3.8 3.8" stroke="#9aa4e0"/><path d="M10.2 10.2 L11.6 11.6" stroke="#e9a46a"/><path d="M7 11.2 V13.2" stroke="#c79adf"/><path d="M0.8 7 H2.6" stroke="#e0b070"/>
    </svg>
    <span class="t" style="left:10px;top:33.5px;font-size:12.5px;font-weight:bold;color:#ffffff;letter-spacing:-0.4px">AI</span>
  </div>
  <svg style="left:1890.5px;top:114.5px" width="15" height="15" viewBox="0 0 15 15" fill="none" stroke="#e6e7ec" stroke-width="1.4" stroke-linecap="round" stroke-linejoin="round">
    <path d="M5 3.6 Q5 0.8 7.5 0.8 Q10 0.8 10 3.6"/><path d="M1 3 L2.4 4.5 H12.6 L14 3"/><path d="M3.6 4.5 V10.4 Q3.6 14.1 7.5 14.1 Q11.4 14.1 11.4 10.4 V4.5"/><path d="M6.2 4.6 V13.6"/><path d="M8.8 4.6 V13.6"/><path d="M0.7 9 H3.6"/><path d="M11.4 9 H14.3"/><path d="M3.9 11.8 L1.3 13.9"/><path d="M11.1 11.8 L13.7 13.9"/>
  </svg>
</div>
<div id="status">
  <svg style="left:29px;top:6px" width="12" height="12" viewBox="0 0 12 12"><circle cx="6" cy="6" r="6" fill="#a2a4ae"/><path d="M4.2 4.2 L7.8 7.8 M7.8 4.2 L4.2 7.8" stroke="#3d3f4a" stroke-width="1.3" stroke-linecap="round"/></svg>
  <span class="t" style="left:45px">0</span>
  <svg style="left:56px;top:6px" width="12" height="12" viewBox="0 0 12 12"><circle cx="6" cy="6" r="6" fill="#a2a4ae"/><path d="M6 2.8 V6.6" stroke="#3d3f4a" stroke-width="1.5" stroke-linecap="round"/><circle cx="6" cy="8.9" r="0.9" fill="#3d3f4a"/></svg>
  <span class="t" style="left:72px">0</span>
  <span class="t" style="left:1648.5px;letter-spacing:-0.2px">行 22，列 21</span>
  <span class="t" style="left:1733.5px;letter-spacing:-0.2px">空格: 4</span>
  <span class="t" style="left:1785.5px;letter-spacing:-0.5px">UTF-8</span>
  <span class="t" style="left:1833.5px;letter-spacing:-0.8px">LF</span>
  <span class="t" style="left:1859px;letter-spacing:3.5px">{}</span>
  <span class="t" style="left:1878.5px;letter-spacing:-0.7px">Java</span>
</div>
<div id="watermark">
<span class="t" style="left:1498px;top:889px;font-family:'Noto Sans CJK SC','Liberation Sans',sans-serif;font-size:25px;color:#dedede;text-shadow:0 0 3px rgba(0,0,0,.75),1px 1px 2px rgba(0,0,0,.7)">掘金技术社区</span>
<span class="t" style="left:1654.5px;top:890px;font-size:25px;color:#dedede;-webkit-text-stroke:0.3px;text-shadow:0 0 3px rgba(0,0,0,.75),1px 1px 2px rgba(0,0,0,.7)">@</span>
<span class="t" style="left:1683.5px;top:890px;font-size:25px;color:#dedede;letter-spacing:0.55px;-webkit-text-stroke:0.35px;text-shadow:0 0 3px rgba(0,0,0,.75),1px 1px 2px rgba(0,0,0,.7)">DebugYourCareer</span>
<svg style="left:1892.5px;top:892.5px" width="12" height="13" viewBox="0 0 12 13" fill="none" stroke="#dedede" stroke-width="1.5"><path d="M1 1 H11 V12 H1 Z"/><path d="M1 7.4 H11"/></svg>
</div>
</body>
</html>
